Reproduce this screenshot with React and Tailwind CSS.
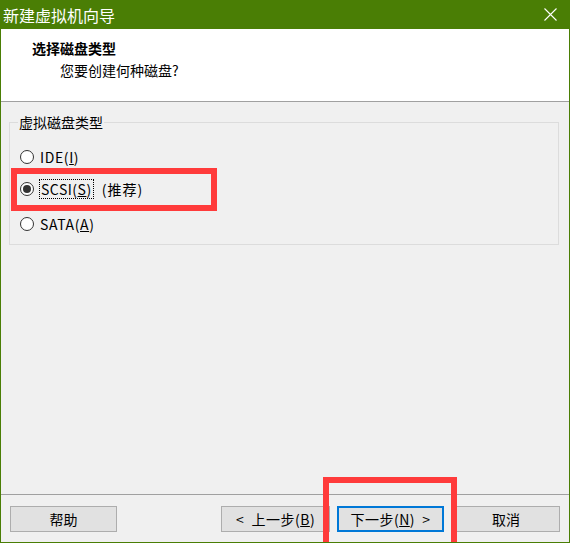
import React from "react";

const font = { fontFamily: '"Noto Sans CJK SC", "Noto Sans", sans-serif' };

function Radio({ checked }) {
  return (
    <span className="w-[14px] h-[14px] rounded-full border border-[#333333] bg-white flex items-center justify-center shrink-0">
      {checked && <span className="w-[8px] h-[8px] rounded-full bg-[#333333]" />}
    </span>
  );
}

function Btn({ children, focused, className = "" }) {
  return (
    <button
      className={
        "h-[26px] w-[107px] flex items-center justify-center text-[14px] leading-none text-black bg-[#e1e1e1] " +
        (focused ? "border-2 border-[#0078d7]" : "border border-[#adadad]") +
        " " +
        className
      }
    >
      {children}
    </button>
  );
}

export default function App() {
  return (
    <div className="w-[570px] h-[543px] relative flex flex-col bg-[#f0f0f0] border border-t-0 border-[#4a7e05] overflow-hidden" style={font}>
      {/* title bar */}
      <div className="h-[29px] -mx-[1px] bg-[#4a7e05] flex items-center justify-between pl-[3px] pr-[13px] shrink-0">
        <span className="text-white text-[16px] leading-none">新建虚拟机向导</span>
        <svg width="13" height="13" viewBox="0 0 13 13" className="block">
          <path d="M0.5 0.5 L12.5 12.5 M12.5 0.5 L0.5 12.5" stroke="#ffffff" strokeWidth="1.1" />
        </svg>
      </div>

      {/* header */}
      <div className="h-[73px] shrink-0 bg-white border-b border-[#a0a0a0] pt-[9px] pl-[31px] flex flex-col gap-[2px]">
        <div className="text-[14px] leading-[20px] font-bold text-black">选择磁盘类型</div>
        <div className="text-[14px] leading-[20px] text-black pl-[28px]">您要创建何种磁盘?</div>
      </div>

      {/* body */}
      <div className="flex-1 pt-[10px] pl-[8px] pr-[10px]">
        <fieldset className="border border-[#dcdcdc] pb-[10px]">
          <legend className="ml-[8px] px-[1px] text-[14px] leading-[20px] text-black">虚拟磁盘类型</legend>
          <div className="flex flex-col pt-[15px] pl-[10px]">
            <div className="h-[20px] flex items-center gap-[5px] text-[14px] text-black">
              <Radio />
              <span className="leading-[18px] px-[1px] tracking-[0.6px]">
                IDE(<span className="underline">I</span>)
              </span>
            </div>
            <div className="h-[20px] mt-[12px] flex items-center gap-[5px] text-[14px] text-black">
              <Radio checked />
              <span className="leading-[18px] px-[1px] border border-dotted border-black tracking-[0.5px]">
                SCSI(<span className="underline">S</span>)
              </span>
              <span className="leading-[18px] ml-[3px] tracking-[1px]">(推荐)</span>
            </div>
            <div className="h-[20px] mt-[15px] flex items-center gap-[5px] text-[14px] text-black">
              <Radio />
              <span className="leading-[18px] px-[1px] tracking-[0.6px]">
                SATA(<span className="underline">A</span>)
              </span>
            </div>
          </div>
        </fieldset>
      </div>

      {/* footer */}
      <div className="shrink-0 border-t border-[#a0a0a0] pt-[11px] pb-[10px] pl-[9px] pr-[9px] flex items-center">
        <Btn>帮助</Btn>
        <div className="flex-1" />
        <Btn className="w-[109px] tracking-[0.5px]">&lt;&nbsp; 上一步(<span className="underline">B</span>)</Btn>
        <Btn focused className="ml-[7px] tracking-[0.5px]">
          下一步(<span className="underline">N</span>)&nbsp; &gt;
        </Btn>
        <Btn className="ml-[8px] w-[108px]">取消</Btn>
      </div>

      {/* annotation highlights */}
      <div className="absolute left-[10px] top-[168px] w-[206px] h-[43px] border-[6px] border-[#ff3b3b] pointer-events-none" />
      <div className="absolute left-[322px] top-[477px] w-[134px] h-[72px] border-[6px] border-[#ff3b3b] pointer-events-none" />
    </div>
  );
}
